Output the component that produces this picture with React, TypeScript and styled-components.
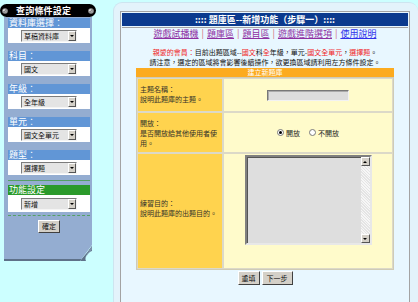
import React from "react";
import styled, { createGlobalStyle } from "styled-components";

const GlobalStyle = createGlobalStyle`
  html, body { margin: 0; padding: 0; background: #ccffff; overflow: hidden; }
  body {
    width: 418px; height: 302px;
    font-family: "Noto Sans CJK TC", "Liberation Sans", sans-serif;
  }
  * { box-sizing: border-box; }
`;

const Page = styled.div`
  display: flex;
  align-items: flex-start;
  padding-top: 2px;
  height: 302px;
`;

/* ---------- Left column ---------- */
const LeftCol = styled.div`
  width: 96px;
  flex-shrink: 0;
  margin-top: 2px;
`;

const TitleBar = styled.div`
  position: relative;
  z-index: 1;
  height: 13px;
  background: #000;
  border-radius: 7px;
  display: flex;
  align-items: center;
  padding: 0 2px;
  color: #fff;
  font-size: 9px;
  font-weight: bold;
  line-height: 13px;
  letter-spacing: 0.2px;
`;

const TitleText = styled.span`
  flex: 1;
  margin-left: 8px;
  white-space: nowrap;
`;

const Bolt = () => (
  <svg width="6" height="6" viewBox="0 0 6 6">
    <circle cx="3" cy="3" r="2.8" fill="#9a9a9a" />
    <circle cx="2.4" cy="2.4" r="1.2" fill="#e8e8e8" />
    <path d="M1.5 4.2 L4.2 1.5" stroke="#555" strokeWidth="0.8" />
  </svg>
);

const Panel = styled.div`
  position: relative;
  margin: 0 4px;
  height: 244px;
  background: #94add1;
  padding: 1px 2px 0 4px;
  border-bottom: 2px solid #5e7189;
  display: flex;
  flex-direction: column;
`;

const SectionList = styled.div`
  display: flex;
  flex-direction: column;
  gap: 8px;
`;

const SectionHead = styled.div<{ $green?: boolean }>`
  height: 10px;
  background: ${(p) => (p.$green ? "#2b9a2b" : "#6196d6")};
  color: #fff;
  font-size: 9px;
  line-height: 10px;
  padding-left: 1px;
  white-space: nowrap;
`;

const SelectRow = styled.div<{ $tall?: boolean }>`
  height: ${(p) => (p.$tall ? 17 : 15)}px;
  background: #fff;
  display: flex;
  align-items: center;
  justify-content: center;
`;

const FakeSelect = styled.div`
  width: 56px;
  height: 12px;
  display: flex;
  border: 1px solid;
  border-color: #7c7c7c #f4f4f4 #f4f4f4 #7c7c7c;
  background: #e4e4e4;
`;

const SelectText = styled.span`
  flex: 1;
  font-size: 7px;
  line-height: 10px;
  padding-left: 2px;
  color: #111;
  white-space: nowrap;
  overflow: hidden;
`;

const ArrowBtn = styled.span`
  width: 8px;
  height: 10px;
  background: #d4d0c8;
  border: 1px solid;
  border-color: #fff #555 #555 #fff;
  display: flex;
  align-items: center;
  justify-content: center;
  &::after {
    content: "";
    border-left: 2px solid transparent;
    border-right: 2px solid transparent;
    border-top: 2px solid #000;
  }
`;

const GreenRule = styled.div<{ $dashed?: boolean }>`
  margin-top: ${(p) => (p.$dashed ? 3 : 5)}px;
  border-top: 1px ${(p) => (p.$dashed ? "dashed" : "solid")} #55a065;
`;

const PanelButton = styled.button`
  align-self: center;
  margin-top: 4px;
  width: 22px;
  height: 13px;
  padding: 0;
  font-family: inherit;
  font-size: 7px;
  line-height: 11px;
  color: #111;
  background: #d4d0c8;
  border: 1px solid;
  border-color: #fff #404040 #404040 #fff;
`;

const Curl = styled.svg`
  position: absolute;
  right: 0;
  bottom: -2px;
`;

const Section = ({ label, value, green, tall }: { label: string; value: string; green?: boolean; tall?: boolean }) => (
  <div>
    <SectionHead $green={green}>{label}</SectionHead>
    <SelectRow $tall={tall}>
      <FakeSelect>
        <SelectText>{value}</SelectText>
        <ArrowBtn />
      </FakeSelect>
    </SelectRow>
  </div>
);

/* ---------- Right side ---------- */
const RightPanel = styled.div`
  flex: 1;
  margin-left: 17px;
  height: 300px;
  background: #e3f3fb;
  border-radius: 9px 9px 0 0;
  border-top: 1px solid #cde5f0;
  border-left: 1px solid #cde5f0;
  padding: 8px 8px 0 6px;
  display: flex;
  flex-direction: column;
`;

const ContentBox = styled.div`
  flex: 1;
  background: #e8f7ff;
  border: 1px solid #a3a3a3;
  border-bottom: none;
  padding: 1px;
  display: flex;
  flex-direction: column;
  align-items: center;
`;

const HeaderWrap = styled.div`
  align-self: stretch;
  padding-bottom: 1px;
  border-bottom: 1px solid #a3a3a3;
`;

const Header = styled.div`
  height: 13px;
  background: #0b3a8e;
  color: #fff;
  font-size: 9px;
  font-weight: bold;
  line-height: 13px;
  text-align: center;
  white-space: nowrap;
`;

const Nav = styled.div`
  margin-top: 1px;
  height: 10px;
  font-size: 9px;
  line-height: 10px;
  white-space: nowrap;
  display: flex;
  gap: 3px;
`;

const NavLink = styled.a<{ $fresh?: boolean }>`
  color: ${(p) => (p.$fresh ? "#3030ea" : "#8e2fa2")};
  text-decoration: underline;
`;

const NavSep = styled.span`
  color: #d0607a;
`;

const Notice = styled.div`
  margin-top: 8px;
  font-size: 7px;
  line-height: 10px;
  color: #111;
  text-align: center;
  white-space: nowrap;
`;

const Red = styled.span`
  color: #f02828;
`;

const FormHead = styled.div`
  margin-top: 1px;
  width: 258px;
  height: 9px;
  background: #fcab1f;
  color: #fff;
  font-size: 7px;
  line-height: 9px;
  text-align: center;
`;

const Table = styled.div`
  width: 258px;
  border: 1px solid #cfcbb6;
  padding: 1px;
  background: #dcd9c8;
  display: grid;
  grid-template-columns: 84px 1fr;
  grid-template-rows: 32px 39px 114px;
  gap: 2px;
`;

const LabelCell = styled.div<{ $lift?: number }>`
  background: #ffd34e;
  padding: 0 2px ${(p) => p.$lift ?? 0}px;
  display: flex;
  flex-direction: column;
  justify-content: center;
  font-size: 7px;
  line-height: 10px;
  color: #33322a;
`;

const FieldCell = styled.div<{ $top?: boolean }>`
  background: #fffbcb;
  display: flex;
  justify-content: center;
  align-items: ${(p) => (p.$top ? "flex-start" : "center")};
  padding-top: ${(p) => (p.$top ? 1 : 0)}px;
`;

const TextInput = styled.div`
  width: 82px;
  height: 11px;
  background: #dcdcdc;
  border: 1px solid;
  border-color: #777 #f2f2f2 #f2f2f2 #777;
  box-shadow: inset 1px 1px 0 #aaa;
`;

const RadioGroup = styled.div`
  display: flex;
  align-items: center;
  font-size: 7px;
  line-height: 10px;
  color: #222;
`;

const Radio = styled.span<{ $on?: boolean }>`
  width: 7px;
  height: 7px;
  border-radius: 50%;
  background: #fff;
  border: 1px solid #7a7a7a;
  margin-right: 2px;
  display: flex;
  align-items: center;
  justify-content: center;
  &::after {
    content: "";
    width: 3px;
    height: 3px;
    border-radius: 50%;
    background: ${(p) => (p.$on ? "#000" : "transparent")};
  }
`;

const RadioLabel = styled.span<{ $gap?: number }>`
  margin-right: ${(p) => p.$gap ?? 0}px;
`;

const TextAreaBox = styled.div`
  width: 127px;
  height: 90px;
  display: flex;
  border: 2px solid;
  border-color: #808080 #e8e8e8 #e8e8e8 #808080;
  box-shadow: inset 1px 1px 0 #555;
  background: #dedede;
`;

const TextAreaField = styled.div`
  flex: 1;
`;

const ScrollBar = styled.div`
  width: 9px;
  display: flex;
  flex-direction: column;
  justify-content: space-between;
  background-color: #f0f0f0;
  background-image: repeating-linear-gradient(45deg, #e4e4e4 0 1px, #f6f6f6 1px 2px);
`;

const ScrollBtn = styled.span<{ $up?: boolean }>`
  height: 9px;
  background: #d4d0c8;
  border: 1px solid;
  border-color: #fff #555 #555 #fff;
  display: flex;
  align-items: center;
  justify-content: center;
  &::after {
    content: "";
    border-left: 2px solid transparent;
    border-right: 2px solid transparent;
    ${(p) => (p.$up ? "border-bottom: 2px solid #000;" : "border-top: 2px solid #000;")}
  }
`;

const ButtonRow = styled.div`
  margin-top: 1px;
  display: flex;
  gap: 2px;
`;

const FormButton = styled.button<{ $w: number }>`
  width: ${(p) => p.$w}px;
  height: 14px;
  padding: 0;
  font-family: inherit;
  font-size: 7px;
  line-height: 12px;
  color: #111;
  background: #d4d0c8;
  border: 1px solid;
  border-color: #fff #404040 #404040 #fff;
`;

export default function App() {
  return (
    <>
      <GlobalStyle />
      <Page>
        <LeftCol>
          <TitleBar>
            <Bolt />
            <TitleText>查詢條件設定</TitleText>
            <Bolt />
          </TitleBar>
          <Panel>
            <SectionList>
              <Section label="資料庫選擇：" value="草稿資料庫" />
              <Section label="科目：" value="國文" />
              <Section label="年級：" value="全年級" />
              <Section label="單元：" value="國文全單元" />
              <Section label="題型：" value="選擇題" />
            </SectionList>
            <GreenRule />
            <div style={{ marginTop: 4 }}>
              <Section label="功能設定" value="新增" green tall />
            </div>
            <GreenRule $dashed />
            <PanelButton>確定</PanelButton>
            <Curl width="12" height="16" viewBox="0 0 12 16">
              <path d="M12 0 L12 16 L0 16 Z" fill="#ccffff" />
              <path d="M12 1 C9 5 6 9 0 16 L6 16 C4 12 8 7 12 6 Z" fill="#5e7189" />
              <path d="M12 1 C9 5 7 9 5 15 C6 11 9 7 12 5 Z" fill="#7d90aa" />
            </Curl>
          </Panel>
        </LeftCol>

        <RightPanel>
          <ContentBox>
            <HeaderWrap>
              <Header>:::: 題庫區--新增功能（步驟一）::::</Header>
            </HeaderWrap>
            <Nav>
              <NavLink>遊戲試播機</NavLink>
              <NavSep>|</NavSep>
              <NavLink>題庫區</NavLink>
              <NavSep>|</NavSep>
              <NavLink>題目區</NavLink>
              <NavSep>|</NavSep>
              <NavLink>遊戲進階選項</NavLink>
              <NavSep>|</NavSep>
              <NavLink $fresh>使用說明</NavLink>
            </Nav>
            <Notice>
              <Red>親愛的會員：</Red>目前出題區域--<Red>國文</Red>科<Red>全</Red>年級，單元-<Red>國文全單元</Red>，<Red>選擇題</Red>。
              <br />
              請注意，選定的區域將會影響後續操作，欲更換區域請利用左方條件設定。
            </Notice>
            <FormHead>建立新題庫</FormHead>
            <Table>
              <LabelCell $lift={3}>
                <span>主題名稱：</span>
                <span>說明此題庫的主題。</span>
              </LabelCell>
              <FieldCell>
                <TextInput />
              </FieldCell>
              <LabelCell>
                <span>開放：</span>
                <span>是否開放給其他使用者使用。</span>
              </LabelCell>
              <FieldCell>
                <RadioGroup>
                  <Radio $on />
                  <RadioLabel $gap={9}>開放</RadioLabel>
                  <Radio />
                  <RadioLabel>不開放</RadioLabel>
                </RadioGroup>
              </FieldCell>
              <LabelCell $lift={6}>
                <span>練習目的：</span>
                <span>說明此題庫的出題目的。</span>
              </LabelCell>
              <FieldCell $top>
                <TextAreaBox>
                  <TextAreaField />
                  <ScrollBar>
                    <ScrollBtn $up />
                    <ScrollBtn />
                  </ScrollBar>
                </TextAreaBox>
              </FieldCell>
            </Table>
            <ButtonRow>
              <FormButton $w={22}>重填</FormButton>
              <FormButton $w={31}>下一步</FormButton>
            </ButtonRow>
          </ContentBox>
        </RightPanel>
      </Page>
    </>
  );
}
